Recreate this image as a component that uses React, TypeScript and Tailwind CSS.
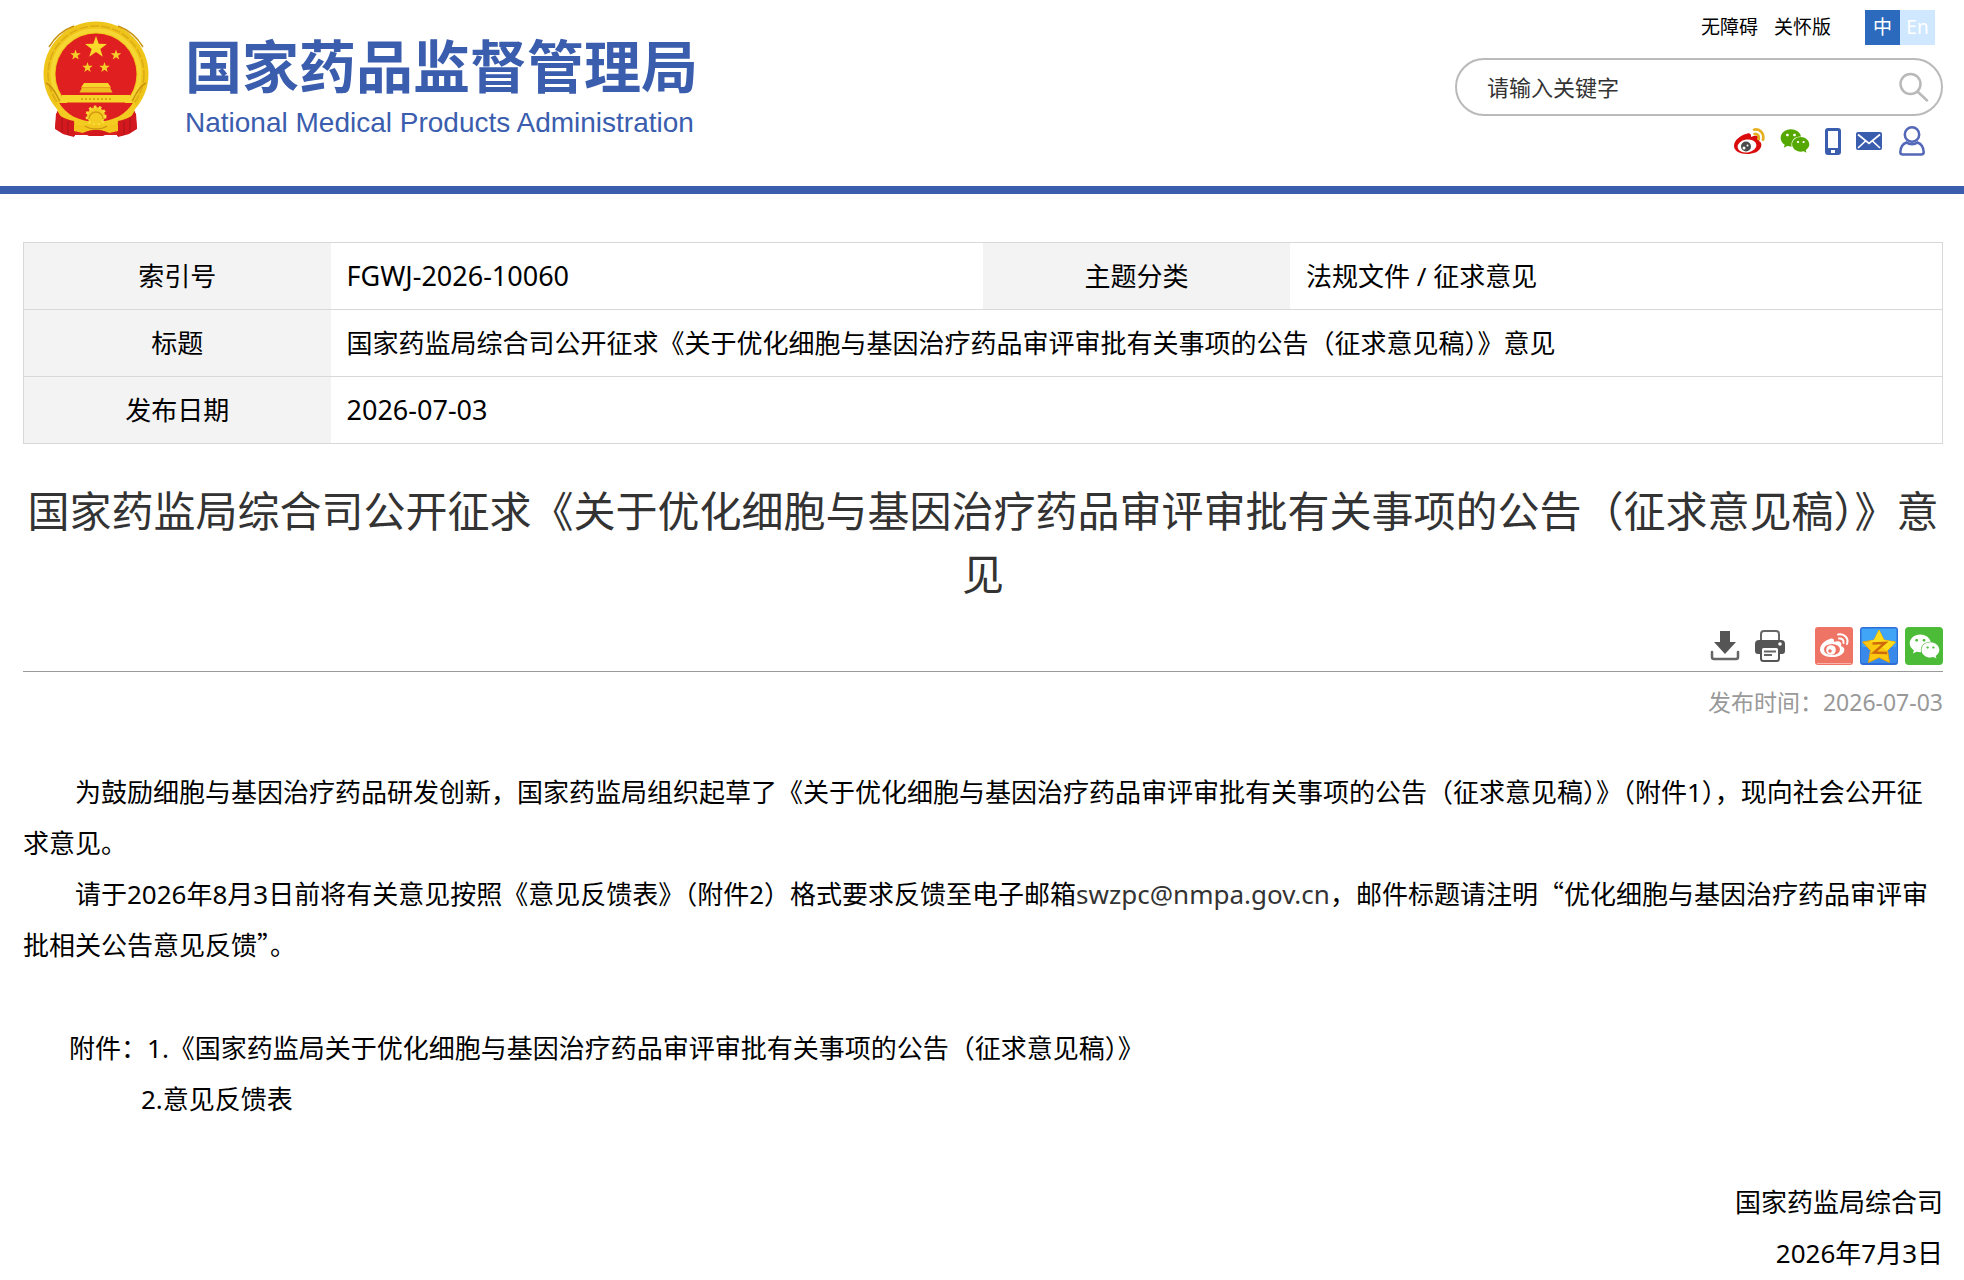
import { ReactNode } from "react";
import { FaWeixin } from "react-icons/fa";

const TITLE = "国家药监局综合司公开征求《关于优化细胞与基因治疗药品审评审批有关事项的公告（征求意见稿）》意见";

const starPoints = (cx: number, cy: number, r: number) =>
  Array.from({ length: 10 }, (_, i) => {
    const radius = i % 2 === 0 ? r : r * 0.4;
    const angle = (Math.PI / 5) * i - Math.PI / 2;
    return `${(cx + radius * Math.cos(angle)).toFixed(2)},${(cy + radius * Math.sin(angle)).toFixed(2)}`;
  }).join(" ");

const Emblem = () => (
  <svg viewBox="0 0 106 116" className="h-[116px] w-[106px] shrink-0" role="img" aria-label="国徽">
    <path d="M14 90 12 108l8 5 11 3 4-16zM92 90l2 18-8 5-11 3-4-16z" fill="#cf1a1f" />
    <circle cx="53" cy="53" r="52.5" fill="#f0c51a" />
    <circle cx="53" cy="53" r="48" fill="none" stroke="#dcab18" strokeWidth="1.5" strokeDasharray="9 2" />
    <circle cx="53" cy="53" r="43.5" fill="none" stroke="#f6d633" strokeWidth="4" />
    <path d="M6 26c6-10 14-17 25-21M100 26C94 16 86 9 75 5M3 62c8 4 10 12 14 18M103 62c-8 4-10 12-14 18" fill="none" stroke="#c9930f" strokeWidth="1.5" />
    <circle cx="53" cy="53" r="40.5" fill="#e01f20" />
    <polygon points={starPoints(53, 26.5, 11.5)} fill="#fbd92b" />
    <polygon points={starPoints(32.5, 34, 5.5)} fill="#f7cf2a" />
    <polygon points={starPoints(73, 34, 5.5)} fill="#f7cf2a" />
    <polygon points={starPoints(44.5, 46.5, 5.5)} fill="#f7cf2a" />
    <polygon points={starPoints(61.5, 46.5, 5.5)} fill="#f7cf2a" />
    <path d="M41 62h24l3 4.5H38z" fill="#f8d52b" />
    <path d="M39 66.5h28l2.5 5h-33z" fill="#eebf1f" />
    <path d="M15 82h76l-2 20-14 12H31L17 102z" fill="#dd1f21" />
    <path d="M15 80c8 14 20 20 38 21 18-1 30-7 38-21l2 6c-5 15-17 22-28 22H41c-11 0-23-7-28-22z" fill="#f4cb20" />
    <path d="M20 82h66c-8 10-17 15-33 15S28 92 20 82z" fill="#dd1f21" />
    <path d="M19 74h68v7.500H19z" fill="#f8d52b" />
    <path d="M38 78h30" stroke="#dba816" strokeWidth="2" strokeDasharray="2 2" />
    <path d="M13 92c7 5 12 7 18 8l1 15c-8 0-14-3-20-8zM93 92c-7 5-12 7-18 8l-1 15c8 0 14-3 20-8z" fill="#d4191e" />
    <path d="M19 97v14M25 100v14M87 97v14M81 100v14" stroke="#a91419" strokeWidth="1" />
    <circle cx="53" cy="95" r="9" fill="#f4cb20" />
    <circle cx="53" cy="95" r="9" fill="none" stroke="#f8dc3c" strokeWidth="3" strokeDasharray="2.500 2.500" />
    <path d="M46 98a7 7 0 0 1 14 0" fill="none" stroke="#d39a12" strokeWidth="1.500" />
    <path d="M31 104c8 0 13 1 22 0 9 1 14 0 22 0v6l-9 2c-8-4-18-4-26 0l-9-2z" fill="#f2c61d" />
    <path d="M42 105c6 4 16 4 22 0" fill="none" stroke="#cf9412" strokeWidth="1.500" />
    <path d="M40 112c8-4 18-4 26 0l-6 3H46z" fill="#d4191e" />
  </svg>
);

const WeiboIcon = () => (
  <svg viewBox="0 0 31 27" className="h-[27px] w-[31px]">
    <path d="M12 6c2-1 4-1 5 1v2c3-1 6-2 8 0 1 1 1 2 0 4 2 1 3 3 2 6-2 5-8 7-14 7C6 26 0 23 0 18 0 12 7 7 12 6z" fill="#d90b0b" />
    <ellipse cx="13" cy="18" rx="9.500" ry="6.500" fill="#fff" transform="rotate(-8 13 18)" />
    <circle cx="12" cy="18.500" r="5" fill="#4b4b4b" />
    <circle cx="10" cy="20" r="1.500" fill="#fff" />
    <circle cx="13.500" cy="17.500" r="1" fill="#fff" />
    <path d="M20 1.700c6-1.500 10.500 4 9 10M20.500 6c3-.5 5 2 4 5" fill="none" stroke="#e4b020" strokeWidth="2.700" strokeLinecap="round" />
  </svg>
);

const PhoneIcon = () => (
  <svg viewBox="0 0 16 27" className="h-[27px] w-[16px]">
    <path fillRule="evenodd" d="M3 0h10a3 3 0 0 1 3 3v21a3 3 0 0 1-3 3H3a3 3 0 0 1-3-3V3a3 3 0 0 1 3-3zm0 3v17h10V3zm3 19v3h4v-3z" fill="#3a5dae" />
  </svg>
);

const MailIcon = () => (
  <svg viewBox="0 0 26 18" className="h-[18px] w-[26px]">
    <rect width="26" height="18" rx="2" fill="#3a5dae" />
    <path d="M2 2.500l11 9 11-9M2 16l7.500-7M24 16l-7.500-7" fill="none" stroke="#fff" strokeWidth="1.700" />
  </svg>
);

const UserIcon = () => (
  <svg viewBox="0 0 26 30" className="ml-0.5 h-[30px] w-[26px]" fill="none" stroke="#5468b8" strokeWidth="2.500">
    <circle cx="13" cy="8.500" r="7.200" />
    <path d="M7.500 16.500C3.500 18 1.500 21.500 1.300 26c0 1.700 1 2.600 2.700 2.600h18c1.700 0 2.700-.9 2.700-2.600-.2-4.500-2.200-8-6.200-9.500-3 2.300-8 2.300-11 0z" />
  </svg>
);

const SearchIcon = () => (
  <svg viewBox="0 0 30 30" className="h-[30px] w-[30px]" fill="none" stroke="#b9b9b9" strokeWidth="2.500" strokeLinecap="round">
    <circle cx="11.500" cy="12" r="10" />
    <path d="M18.500 19.500 28 28.500" />
  </svg>
);

const DownloadIcon = () => (
  <svg viewBox="0 0 30 30" className="h-[30px] w-[30px]">
    <path d="M10 0h10v11h6L15 23 4 11h6z" fill="#555" />
    <path d="M2 21v5a2 2 0 0 0 2 2h22a2 2 0 0 0 2-2v-5" fill="none" stroke="#666" strokeWidth="2.500" strokeLinecap="round" />
  </svg>
);

const PrintIcon = () => (
  <svg viewBox="0 0 30 32" className="h-[32px] w-[30px]">
    <path d="M6 11V4a3 3 0 0 1 3-3h12a3 3 0 0 1 3 3v7" fill="none" stroke="#666" strokeWidth="2" />
    <path d="M4 10h22a4 4 0 0 1 4 4v7a3 3 0 0 1-3 3H3a3 3 0 0 1-3-3v-7a4 4 0 0 1 4-4z" fill="#555" />
    <circle cx="25" cy="14" r="1.800" fill="#fff" />
    <rect x="6" y="17" width="18" height="14" rx="2.500" fill="#fff" stroke="#555" strokeWidth="2" />
    <path d="M9 21.500h12M9 25h8" stroke="#666" strokeWidth="2" />
  </svg>
);

const ShareWeibo = () => (
  <svg viewBox="0 0 38 38" className="h-[38px] w-[38px]">
    <rect width="38" height="38" rx="3" fill="#ee7565" />
    <path d="M2 36.500h34" stroke="#f9b5ab" />
    <path d="M15 12c2-1 4-.5 4 2v1c3-1 6-1 7 1 .6 1 .3 2 0 3 3 1 4 3 3 5.500C27 29 21 30.500 16 30 10 30 5 27 5 22.500 5 17 11 13 15 12z" fill="#fff" />
    <ellipse cx="17" cy="22.500" rx="8" ry="5.500" fill="#ee7565" />
    <circle cx="16" cy="23" r="4.800" fill="#fff" />
    <circle cx="15" cy="24" r="1.800" fill="#ee7565" />
    <path d="M23 7.500c6-1.500 11 3.500 9 9.500M24 11.500c3-.5 5 1.500 4.500 4.500" fill="none" stroke="#fff" strokeWidth="2" strokeLinecap="round" />
  </svg>
);

const ShareQzone = () => (
  <svg viewBox="0 0 38 38" className="h-[38px] w-[38px]">
    <rect width="38" height="38" rx="3" fill="#2d6fd6" />
    <rect x="1.500" y="1.500" width="35" height="34" rx="1" fill="#41a5f7" />
    <path d="M1.500 20h35v15.500h-35z" fill="#3889ea" />
    <path d="M19 3l5 10 11.500 2-8 8.500 2 12L19 30.500 8.500 35.500l2-12-8-8.500L14 13z" fill="#fbc80f" stroke="#e8a10c" strokeWidth="1" />
    <path d="M19 3l5 10 11.500 2-8 8.500-18-9.500 4.500-1z" fill="#fddd1c" />
    <path d="M12.500 16.500 25 16l-11 9.500 13 .5" fill="none" stroke="#cf6a0c" strokeWidth="2.500" />
  </svg>
);

const ShareWechat = () => (
  <span className="flex h-[38px] w-[38px] items-center justify-center rounded bg-[#4cbb38]">
    <FaWeixin className="h-[31px] w-[31px] text-white" />
  </span>
);

interface IconLinkProps {
  label: string;
  children: ReactNode;
}

const IconLink = ({ label, children }: IconLinkProps) => (
  <a href="#" aria-label={label} className="flex items-center">
    {children}
  </a>
);

const Header = () => (
  <header className="flex items-start justify-between border-b-8 border-[#3a5dae] pr-[21px] pl-[43px]">
    <div className="flex gap-9 pt-[21px]">
      <Emblem />
      <div className="pt-3.5 text-[#3a5dae]">
        <p className="font-['Noto_Sans_CJK_SC',sans-serif] text-[57px] leading-[56px] font-bold whitespace-nowrap">
          国家药品监督管理局
        </p>
        <p className="mt-3.5 font-['Liberation_Sans',sans-serif] text-[28px] leading-9 whitespace-nowrap">
          National Medical Products Administration
        </p>
      </div>
    </div>
    <div className="flex w-[488px] flex-col items-end pt-2.5 pb-[30px]">
      <div className="flex items-center pr-2 text-[19px] leading-[35px]">
        <a href="#" className="mr-4">无障碍</a>
        <a href="#" className="mr-[34px]">关怀版</a>
        <button type="button" className="size-[35px] bg-[#2b6abc] text-white">中</button>
        <button type="button" className="size-[35px] bg-[#cfe7ff] text-white">En</button>
      </div>
      <form className="mt-[13px] flex h-[58px] w-full items-center rounded-full border-2 border-[#bababa] pr-3 pl-[30px]">
        <input
          type="text"
          aria-label="请输入关键字"
          placeholder="请输入关键字"
          className="min-w-0 flex-1 text-[22px] outline-none placeholder:text-[#333]"
        />
        <button type="button" aria-label="搜索">
          <SearchIcon />
        </button>
      </form>
      <nav className="mt-2.5 flex items-center gap-[15px] pr-[18px]">
        <IconLink label="微博"><WeiboIcon /></IconLink>
        <IconLink label="微信"><FaWeixin className="size-[30px] text-[#55a800]" /></IconLink>
        <IconLink label="手机版"><PhoneIcon /></IconLink>
        <IconLink label="邮箱"><MailIcon /></IconLink>
        <IconLink label="个人中心"><UserIcon /></IconLink>
      </nav>
    </div>
  </header>
);

const labelCell = "h-[67px] w-[16%] border-y border-[#d8d8d8] bg-[#f3f3f3] text-center font-normal";
const valueCell = "border-y border-[#d8d8d8] px-4";

const InfoTable = () => (
  <table className="w-full table-fixed border-collapse border border-[#d8d8d8] text-[26px] leading-9">
    <tbody>
      <tr>
        <th scope="row" className={labelCell}>索引号</th>
        <td className={`${valueCell} text-[27px]`}>FGWJ-2026-10060</td>
        <th scope="row" className={labelCell}>主题分类</th>
        <td className={valueCell}>法规文件 / 征求意见</td>
      </tr>
      <tr>
        <th scope="row" className={labelCell}>标题</th>
        <td colSpan={3} className={valueCell}>{TITLE}</td>
      </tr>
      <tr>
        <th scope="row" className={labelCell}>发布日期</th>
        <td colSpan={3} className={`${valueCell} text-[27px]`}>2026-07-03</td>
      </tr>
    </tbody>
  </table>
);

export default function App() {
  return (
    <div className="bg-white font-['Noto_Sans','Noto_Sans_CJK_SC',sans-serif] text-black" lang="zh-CN">
      <Header />
      <main className="pt-12 pr-[21px] pl-[23px]">
        <InfoTable />
        <h1 className="mt-[35px] text-center text-[42px] leading-[63px] text-[#333]">{TITLE}</h1>
        <div className="mt-[22px] flex items-center justify-end border-b border-[#999] pb-1.5">
          <button type="button" aria-label="下载" className="mr-[15px]"><DownloadIcon /></button>
          <button type="button" aria-label="打印" className="mr-[30px]"><PrintIcon /></button>
          <div className="flex gap-[7px]">
            <IconLink label="分享到微博"><ShareWeibo /></IconLink>
            <IconLink label="分享到QQ空间"><ShareQzone /></IconLink>
            <IconLink label="分享到微信"><ShareWechat /></IconLink>
          </div>
        </div>
        <p className="mt-3 text-right text-[23px] leading-9 text-[#999]">发布时间：2026-07-03</p>
        <article className="mt-[47px] text-[26px] leading-[51px]">
          <p className="indent-[2em]">
            为鼓励细胞与基因治疗药品研发创新，国家药监局组织起草了《关于优化细胞与基因治疗药品审评审批有关事项的公告（征求意见稿）》（附件1），现向社会公开征求意见。
          </p>
          <p className="indent-[2em]">
            请于2026年8月3日前将有关意见按照《意见反馈表》（附件2）格式要求反馈至电子邮箱
            <a href="mailto:swzpc@nmpa.gov.cn" className="text-[#333]">swzpc@nmpa.gov.cn</a>
            ，邮件标题请注明<span className="font-['Noto_Sans_CJK_SC',sans-serif] leading-none">“优化细胞与基因治疗药品审评审批相关公告意见反馈”。</span>
          </p>
          <p className="mt-[52px] pl-[46px]">
            附件：<a href="#">1.《国家药监局关于优化细胞与基因治疗药品审评审批有关事项的公告（征求意见稿）》</a>
          </p>
          <p className="pl-[118px]"><a href="#">2.意见反馈表</a></p>
          <p className="mt-[52px] text-right">国家药监局综合司</p>
          <p className="text-right">2026年7月3日</p>
        </article>
      </main>
    </div>
  );
}
